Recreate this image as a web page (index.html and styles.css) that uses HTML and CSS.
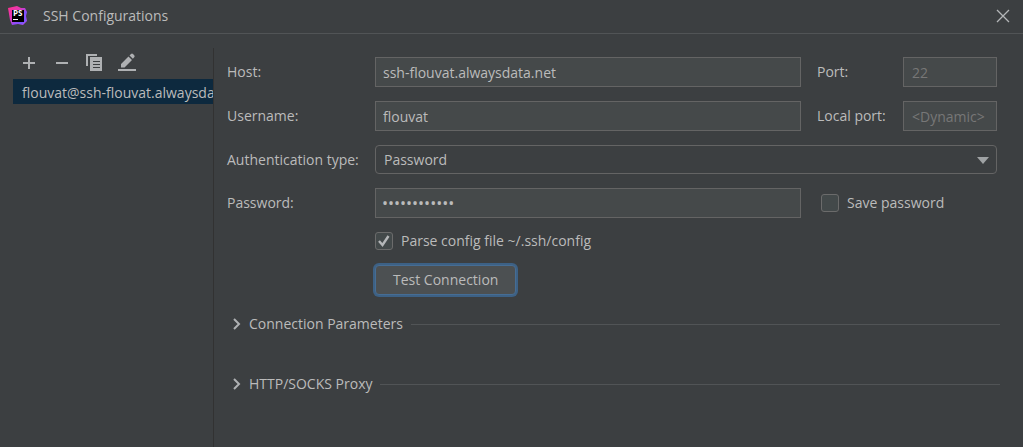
FILE: index.html
```html
<!DOCTYPE html>
<html lang="en">
<head>
<meta charset="utf-8">
<title>SSH Configurations</title>
<link rel="stylesheet" href="styles.css">
</head>
<body>
<header class="titlebar">
  <svg class="logo" width="20" height="20" viewBox="0 0 20 20" aria-hidden="true">
    <defs>
      <linearGradient id="g" x1="0" y1="0" x2="1" y2="1">
        <stop offset="0" stop-color="#ff318c"/><stop offset=".4" stop-color="#e238b8"/><stop offset=".65" stop-color="#8a4dff"/><stop offset="1" stop-color="#b04be8"/>
      </linearGradient>
    </defs>
    <path fill="url(#g)" d="M0 2 9 0l4 2 4 0 2 4-1 4 1 5-4 4-5-1-6 1-2-5z"/>
    <path fill="#7b55ff" d="m15 4 3 2-1 4 1 5-4 3-5-1 5-2z"/>
    <path fill="#000" d="M4 4h12v12H4z"/>
    <text class="logo-text" x="5" y="10">PS</text>
    <path fill="#fff" d="M5 13h5v1H5z"/>
  </svg>
  <h1 class="title">SSH Configurations</h1>
  <button class="close" type="button" aria-label="Close">
    <svg width="14" height="14" viewBox="0 0 14 14"><path d="m1 1 12 12M13 1 1 13" fill="none" stroke="#b4b6b8" stroke-width="1.3"/></svg>
  </button>
</header>
<div class="content">
  <aside class="sidebar">
    <div class="toolbar">
      <button type="button" class="tool" aria-label="Add"><svg width="20" height="20" viewBox="0 0 20 20"><path fill="#afb1b3" d="M9 4h2v5h5v2h-5v5H9v-5H4V9h5z"/></svg></button>
      <button type="button" class="tool" aria-label="Remove"><svg width="20" height="20" viewBox="0 0 20 20"><path fill="#afb1b3" d="M4 9h12v2H4z"/></svg></button>
      <button type="button" class="tool" aria-label="Copy"><svg width="20" height="20" viewBox="0 0 20 20"><path fill="#afb1b3" d="M1 1h11v2H3v10H1zM5 4h12v14H5z"/><path stroke="#3c3f41" d="M8 8.500h7M8 11.500h7M8 14.500h7"/></svg></button>
      <button type="button" class="tool" aria-label="Edit"><svg width="20" height="20" viewBox="0 0 20 20"><path fill="#afb1b3" d="M0 16h18v2H0zM3 14.500V11l7.500-7.500L14 7 6.500 14.500zM11.500 2.500 13 1q1-1 2 0l1.200 1.200q1 1 0 2L14.900 5.700z"/></svg></button>
    </div>
    <ul class="list">
      <li class="item">flouvat@ssh-flouvat.alwaysdata.net:22</li>
    </ul>
  </aside>
  <main class="main">
    <form class="form">
      <label for="host">Host:</label>
      <input class="field" id="host" type="text" value="ssh-flouvat.alwaysdata.net">
      <label class="side" for="port">Port:</label>
      <input class="field" id="port" type="text" placeholder="22">

      <label for="user">Username:</label>
      <input class="field" id="user" type="text" value="flouvat">
      <label class="side" for="local">Local port:</label>
      <input class="field" id="local" type="text" placeholder="&lt;Dynamic&gt;">

      <label for="auth">Authentication type:</label>
      <div class="combo">
        <select class="select" id="auth"><option>Password</option><option>Key pair</option></select>
        <svg class="arrow" width="12" height="8" viewBox="0 0 12 8" aria-hidden="true"><path fill="#9fa2a4" d="M0 1h12L6 8z"/></svg>
      </div>

      <label for="pass">Password:</label>
      <input class="field password" id="pass" type="password" value="secretsecret">
      <label class="check save"><input class="box" type="checkbox">Save password</label>

      <div class="actions">
        <label class="check"><input class="box" type="checkbox" checked><svg class="tick" width="18" height="18" viewBox="0 0 18 18" aria-hidden="true"><path fill="none" stroke="#b4b6b8" stroke-width="2.400" d="m4 9 3.500 4L13.500 4"/></svg>Parse config file ~/.ssh/config</label>
        <button class="test" type="button">Test Connection</button>
      </div>
    </form>
    <div class="sections">
      <button class="section" type="button"><svg width="8" height="12" viewBox="0 0 8 12"><path fill="none" stroke="#afb1b3" stroke-width="2" d="m1 1 5 5-5 5"/></svg><span>Connection Parameters</span></button>
      <button class="section" type="button"><svg width="8" height="12" viewBox="0 0 8 12"><path fill="none" stroke="#afb1b3" stroke-width="2" d="m1 1 5 5-5 5"/></svg><span>HTTP/SOCKS Proxy</span></button>
    </div>
  </main>
</div>
</body>
</html>
```
FILE: styles.css
```css
* { box-sizing: border-box; }

body {
  margin: 0;
  min-height: 100vh;
  display: flex;
  flex-direction: column;
  background: #3c3f41;
  color: #bbbbbb;
  font: 14px/20px "Open Sans", "Noto Sans", sans-serif;
}

button, input, select { font: inherit; color: inherit; }

button { border: 0; padding: 0; background: none; }

svg { display: block; flex: none; }

.titlebar {
  display: flex;
  align-items: center;
  height: 34px;
  padding: 0 6px 2px 8px;
  border-bottom: 1px solid #515456;
}

.logo-text { font: bold 8px "Open Sans", sans-serif; fill: #fff; }

.title { margin: 0 auto 0 15px; font-size: 14px; font-weight: 400; }

.close { padding: 7px; }

.content { flex: 1; display: flex; padding-top: 14px; }

.sidebar {
  flex: none;
  width: 214px;
  padding-left: 13px;
  border-right: 1px solid #323232;
}

.toolbar { display: flex; gap: 13px; padding: 5px 6px 6px; }

.list { margin: 0; padding: 0; list-style: none; }

.item {
  height: 25px;
  padding-left: 9px;
  line-height: 28px;
  overflow: hidden;
  white-space: nowrap;
  background: #0d293e;
}

.main { flex: 1; min-width: 0; padding: 9px 23px 0 13px; }

.form {
  display: grid;
  grid-template-columns: 132px minmax(0, 1fr) 70px 94px;
  gap: 14px 16px;
  align-items: center;
  margin-right: 3px;
}

.form > label { white-space: nowrap; }

.field {
  width: 100%;
  height: 30px;
  padding: 0 7px;
  border: 1px solid #646464;
  border-radius: 0;
  background: #45494a;
  outline: 0;
}

.field::placeholder { color: #777777; opacity: 1; }

.password { padding: 0 6px; font-size: 16px; }

#port, #local { padding: 0 8px; }

.combo { grid-column: 2 / -1; display: grid; align-items: center; }

.select {
  grid-area: 1 / 1;
  width: 100%;
  height: 29px;
  padding: 0 8px;
  border: 1px solid #646464;
  border-radius: 4px;
  background: #3c3f41;
  appearance: none;
}

.arrow { grid-area: 1 / 1; justify-self: end; margin-right: 8px; pointer-events: none; }

.check { display: grid; grid-template-columns: 18px auto; gap: 8px; align-items: center; justify-content: start; }

.save { grid-column: 3 / -1; padding-left: 4px; }

.box {
  grid-area: 1 / 1;
  width: 18px;
  height: 18px;
  margin: 0;
  appearance: none;
  border: 1px solid #6b6b6b;
  border-radius: 3px;
  background: #43494a;
}

.tick { grid-area: 1 / 1; z-index: 1; pointer-events: none; }

.actions { grid-column: 2; display: grid; gap: 14px; justify-items: start; margin-top: -1px; }

.test {
  height: 30px;
  padding: 0 17px;
  border: 1px solid #466d94;
  border-radius: 4px;
  background: #4c5052;
  box-shadow: 0 0 0 2px #3d6185;
}

.sections { display: grid; gap: 40px; margin-top: 19px; }

.section { display: flex; align-items: center; gap: 8px; padding-left: 6px; }

.section::after { content: ""; flex: 1; height: 1px; background: #515456; }
```
